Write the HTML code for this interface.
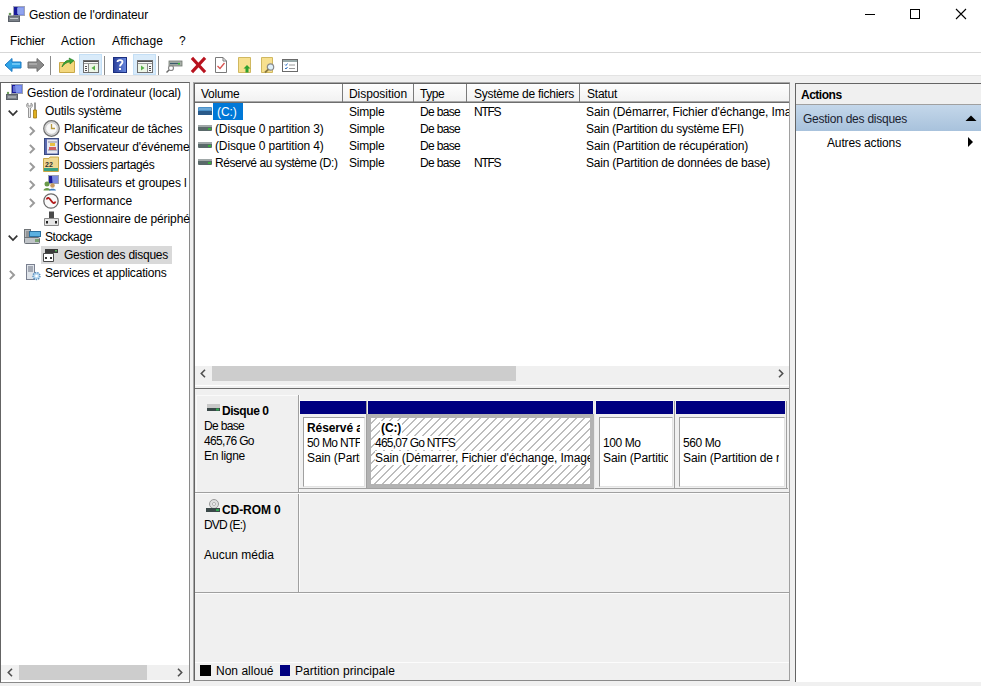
<!DOCTYPE html>
<html><head><meta charset="utf-8">
<style>
*{margin:0;padding:0;box-sizing:border-box}
html,body{width:981px;height:686px;overflow:hidden;background:#f0f0f0;font-family:"Liberation Sans",sans-serif;font-size:12px;color:#000}
.a{position:absolute}
.t{position:absolute;white-space:nowrap;line-height:14px;letter-spacing:-0.1px}
svg{position:absolute;overflow:visible}
</style></head><body>
<!-- title bar -->
<div class="a" style="left:0;top:0;width:981px;height:53px;background:#fff"></div>
<svg style="left:8px;top:6px" width="17" height="16" viewBox="0 0 17 16"><rect x="5.5" y="0.5" width="11" height="9" fill="#7a8ee8" stroke="#a0a4b8"/><path d="M6 1H9.5L10 9H6Z" fill="#1a1a9a"/><rect x="9" y="2" width="6.5" height="6" fill="#9aaef2" opacity="0.7"/><rect x="0.5" y="10" width="11" height="5.5" fill="#7a8088" stroke="#5a6068"/><path d="M2 12.5H10" stroke="#c8ccd0"/><circle cx="2" cy="8" r="1.3" fill="#6a9a5a"/></svg>
<div class="t" style="left:29px;top:8px;letter-spacing:-0.051px">Gestion de l'ordinateur</div>
<!-- window buttons -->
<div class="a" style="left:865px;top:14px;width:10px;height:1px;background:#000"></div>
<div class="a" style="left:910px;top:9px;width:10px;height:10px;border:1px solid #000"></div>
<svg style="left:956px;top:9px" width="10" height="10"><path d="M0 0L10 10M10 0L0 10" stroke="#000" stroke-width="1.1"/></svg>
<!-- menu -->
<div class="t" style="left:10px;top:34px;letter-spacing:-0.188px">Fichier</div>
<div class="t" style="left:61px;top:34px;letter-spacing:0.140px">Action</div>
<div class="t" style="left:112px;top:34px;letter-spacing:0.130px">Affichage</div>
<div class="t" style="left:179px;top:34px">?</div>
<div class="a" style="left:0;top:52px;width:981px;height:1px;background:#d7d7d7"></div>
<!-- toolbar -->
<div class="a" style="left:0;top:53px;width:981px;height:22px;background:#fff"></div>
<div class="a" style="left:0;top:75px;width:981px;height:1px;background:#e3e3e3"></div>


<!-- toolbar icons -->
<svg style="left:4px;top:57px" width="18" height="16" viewBox="0 0 18 16"><path d="M1 8L8 1.5V5H17V11H8V14.5Z" fill="#2fa4e7" stroke="#1a78c2" stroke-width="1"/><path d="M8 6H16V8H8Z" fill="#6cc6f5"/></svg>
<svg style="left:27px;top:57px" width="18" height="16" viewBox="0 0 18 16"><path d="M17 8L10 1.5V5H1V11H10V14.5Z" fill="#8c8c8c" stroke="#6e6e6e" stroke-width="1"/><path d="M2 6H10V8H2Z" fill="#a8a8a8"/></svg>
<div class="a" style="left:50px;top:56px;width:1px;height:19px;background:#8a8a8a"></div>
<svg style="left:59px;top:57px" width="16" height="16" viewBox="0 0 16 16"><path d="M0.5 5.5H6L7 4H15.5V15.5H0.5Z" fill="#f3d77d" stroke="#c8a848"/><path d="M3 10C4 6 7 3 11 3L10 1L15 3.5L11 7L11 5C8 5 5 7 3 10Z" fill="#3aa63a" stroke="#1f7a1f" stroke-width="0.6"/></svg>
<div class="a" style="left:79px;top:54px;width:23px;height:21px;background:#d9ebfa;border:1px solid #c4dff6"></div>
<svg style="left:83px;top:60px" width="16" height="13" viewBox="0 0 16 13"><rect x="0.5" y="0.5" width="15" height="12" fill="#fafafa" stroke="#707070"/><path d="M1 1.5H15" stroke="#505050"/><path d="M1 3.5H15" stroke="#9a9a9a"/><path d="M2 6.5H4M2 8.5H4M2 10.5H4" stroke="#505050"/><path d="M5.5 4V12" stroke="#8a8a8a"/><rect x="6" y="4" width="9" height="8" fill="#eef6e8"/><path d="M12 5.5L8.5 8L12 10.5Z" fill="#58b048"/></svg>
<div class="a" style="left:104px;top:56px;width:1px;height:19px;background:#8a8a8a"></div>
<svg style="left:113px;top:57px" width="14" height="16" viewBox="0 0 14 16"><defs><linearGradient id="hg" x1="0" x2="1"><stop offset="0" stop-color="#2a3f9a"/><stop offset="1" stop-color="#6a8ae0"/></linearGradient></defs><rect x="0.5" y="0.5" width="13" height="15" fill="url(#hg)" stroke="#1b2f80"/><path d="M4.5 5C4.5 2.5 9.5 2.5 9.5 5C9.5 7 7 7 7 9.5" fill="none" stroke="#fff" stroke-width="1.8"/><rect x="6" y="11" width="2" height="2" fill="#fff"/></svg>
<div class="a" style="left:133px;top:54px;width:23px;height:21px;background:#d9ebfa;border:1px solid #c4dff6"></div>
<svg style="left:137px;top:60px" width="16" height="13" viewBox="0 0 16 13"><rect x="0.5" y="0.5" width="15" height="12" fill="#fafafa" stroke="#707070"/><path d="M1 1.5H15" stroke="#505050"/><path d="M1 3.5H15" stroke="#9a9a9a"/><path d="M12 6.5H14M12 8.5H14M12 10.5H14" stroke="#505050"/><path d="M10.5 4V12" stroke="#8a8a8a"/><rect x="1" y="4" width="9" height="8" fill="#eef6e8"/><path d="M4 5.5L7.5 8L4 10.5Z" fill="#58b048"/></svg>
<div class="a" style="left:158px;top:56px;width:1px;height:19px;background:#8a8a8a"></div>
<svg style="left:166px;top:59px" width="16" height="14" viewBox="0 0 16 14"><rect x="3" y="2" width="13" height="5" fill="#a8b0a8" stroke="#707870" stroke-width="0.8"/><path d="M4 4.5H14" stroke="#3a5a6a" stroke-width="1.2"/><rect x="12" y="4" width="2" height="1.5" fill="#2fbf2f"/><circle cx="5" cy="9" r="2.5" fill="none" stroke="#8a8a8a" stroke-width="1.2"/><path d="M3 11L0.5 13.5" stroke="#6a6a6a" stroke-width="1.5"/></svg>
<svg style="left:191px;top:58px" width="15" height="14" viewBox="0 0 15 14"><path d="M2 1L13 13M13 1L2 13" stroke="#b8121e" stroke-width="3.2" stroke-linecap="square"/></svg>
<svg style="left:215px;top:57px" width="12" height="16" viewBox="0 0 12 16"><path d="M0.5 0.5H8L11.5 4V15.5H0.5Z" fill="#fff" stroke="#7a7a7a"/><path d="M8 0.5V4H11.5" fill="none" stroke="#7a7a7a"/><path d="M2.5 9L5 11.5L9.5 6" fill="none" stroke="#d9534f" stroke-width="1.3"/></svg>
<svg style="left:238px;top:57px" width="13" height="16" viewBox="0 0 13 16"><path d="M0.5 0.5H12.5V15.5H0.5Z" fill="#f7e08f" stroke="#d0b860"/><path d="M9 8L12.5 11.5H10.5V15.5H7.5V11.5H5.5Z" fill="#2fa02f"/></svg>
<svg style="left:261px;top:57px" width="15" height="16" viewBox="0 0 15 16"><path d="M0.5 0.5H11.5V15.5H0.5Z" fill="#f7e08f" stroke="#d0b860"/><circle cx="9.5" cy="10" r="3.2" fill="#dff0fa" stroke="#8a8a8a" stroke-width="1.2"/><path d="M7.3 12.3L4 15.5" stroke="#8a7a40" stroke-width="1.8"/></svg>
<svg style="left:282px;top:59px" width="16" height="13" viewBox="0 0 16 13"><rect x="0.5" y="0.5" width="15" height="12" fill="#fff" stroke="#6a6a6a"/><rect x="1" y="1" width="14" height="2" fill="#9aa"/><path d="M3 5.5L4 6.5L5.5 4.5M3 9L4 10L5.5 8" fill="none" stroke="#3070c0"/><path d="M7 6H13M7 9.5H13" stroke="#9a9a9a"/></svg>

<!-- left pane -->
<div class="a" style="left:0;top:82px;width:190px;height:601px;background:#fff;border-left:1px solid #646464;border-top:1px solid #646464;border-right:1px solid #8a8a8a;border-bottom:1px solid #8a8a8a"></div>


<!-- tree -->
<div class="a" style="left:41px;top:246px;width:131px;height:18px;background:#d9d9d9"></div>
<div class="t" style="left:27px;top:86px;letter-spacing:-0.077px">Gestion de l'ordinateur (local)</div>
<div class="t" style="left:45px;top:104px;letter-spacing:-0.156px">Outils système</div>
<div class="t" style="left:64px;top:122px;letter-spacing:-0.131px">Planificateur de tâches</div>
<div class="t" style="left:64px;top:140px">Observateur d'événeme</div>
<div class="t" style="left:64px;top:158px;letter-spacing:-0.378px">Dossiers partagés</div>
<div class="t" style="left:64px;top:176px;letter-spacing:-0.112px">Utilisateurs et groupes l</div>
<div class="t" style="left:64px;top:194px;letter-spacing:-0.064px">Performance</div>
<div class="t" style="left:64px;top:212px">Gestionnaire de périphé</div>
<div class="t" style="left:45px;top:230px;letter-spacing:-0.381px">Stockage</div>
<div class="t" style="left:64px;top:248px;letter-spacing:-0.249px">Gestion des disques</div>
<div class="t" style="left:45px;top:266px;letter-spacing:-0.187px">Services et applications</div>
<svg style="left:8px;top:110px" width="10" height="6" viewBox="0 0 10 6"><path d="M0.7 0.7L5 5L9.3 0.7" fill="none" stroke="#333" stroke-width="1.7"/></svg><svg style="left:8px;top:235px" width="10" height="6" viewBox="0 0 10 6"><path d="M0.7 0.7L5 5L9.3 0.7" fill="none" stroke="#333" stroke-width="1.7"/></svg>
<svg style="left:29px;top:126px" width="6" height="10" viewBox="0 0 6 10"><path d="M0.9 0.9L5 5L0.9 9.1" fill="none" stroke="#9a9a9a" stroke-width="2"/></svg>
<svg style="left:29px;top:144px" width="6" height="10" viewBox="0 0 6 10"><path d="M0.9 0.9L5 5L0.9 9.1" fill="none" stroke="#9a9a9a" stroke-width="2"/></svg>
<svg style="left:29px;top:162px" width="6" height="10" viewBox="0 0 6 10"><path d="M0.9 0.9L5 5L0.9 9.1" fill="none" stroke="#9a9a9a" stroke-width="2"/></svg>
<svg style="left:29px;top:180px" width="6" height="10" viewBox="0 0 6 10"><path d="M0.9 0.9L5 5L0.9 9.1" fill="none" stroke="#9a9a9a" stroke-width="2"/></svg>
<svg style="left:29px;top:198px" width="6" height="10" viewBox="0 0 6 10"><path d="M0.9 0.9L5 5L0.9 9.1" fill="none" stroke="#9a9a9a" stroke-width="2"/></svg>
<svg style="left:9px;top:270px" width="6" height="10" viewBox="0 0 6 10"><path d="M0.9 0.9L5 5L0.9 9.1" fill="none" stroke="#9a9a9a" stroke-width="2"/></svg>

<svg style="left:6px;top:84px" width="17" height="17" viewBox="0 0 17 17"><rect x="5.5" y="0.5" width="11" height="9" fill="#6a7fe8" stroke="#9aa0b0"/><path d="M6 1H9L10 9H6Z" fill="#1a1a9a"/><rect x="7" y="2" width="8" height="6" fill="#8fa4f0" opacity="0.6"/><rect x="0.5" y="10.5" width="11" height="5" fill="#7a8088" stroke="#5a6068"/><path d="M2 13H10" stroke="#c8ccd0"/><circle cx="2" cy="9" r="1.2" fill="#6a9a5a"/></svg>
<svg style="left:26px;top:102px" width="13" height="17" viewBox="0 0 13 17"><path d="M2 1C0 2 0 5 2.5 6V15.5H4.5V6C7 5 7 2 5 1V4H2Z" fill="#e8e8e8" stroke="#8a8a8a" stroke-width="0.9"/><path d="M9 0.5V8" stroke="#555" stroke-width="1.2"/><path d="M7.5 8H10.5V16H7.5Z" fill="#e0b020" stroke="#a07810" stroke-width="0.8"/></svg>
<svg style="left:43px;top:120px" width="17" height="17" viewBox="0 0 17 17"><circle cx="8.5" cy="8.5" r="7.8" fill="#d8d8d8" stroke="#707070" stroke-width="1.2"/><circle cx="8.5" cy="8.5" r="5.8" fill="#f8f8f8" stroke="#b8b8b8" stroke-width="0.6"/><path d="M8.5 4V8.5H12" fill="none" stroke="#b89a40" stroke-width="1.3"/></svg>
<svg style="left:44px;top:138px" width="15" height="17" viewBox="0 0 15 17"><rect x="0.5" y="0.5" width="14" height="16" fill="#5a6ab0" stroke="#3a4a80"/><rect x="3" y="1.5" width="10.5" height="14" fill="#e8e8f0"/><path d="M4 4H13M4 12H13" stroke="#8a8a9a"/><rect x="6" y="5" width="5" height="3" fill="#e8c040"/><rect x="5" y="9" width="7" height="3" fill="#d06060"/></svg>
<svg style="left:43px;top:156px" width="16" height="16" viewBox="0 0 16 16"><path d="M0.5 2.5H6L7 1H15.5V15.5H0.5Z" fill="#f0d890" stroke="#c8a848"/><path d="M1 12H15V15H1Z" fill="#3aa080"/><text x="2" y="11" font-size="7" font-family="Liberation Sans" font-weight="bold" fill="#333">22</text></svg>
<svg style="left:43px;top:175px" width="16" height="16" viewBox="0 0 16 16"><rect x="5.5" y="0.5" width="10" height="8" fill="#7a8ae0" stroke="#9aa0b0"/><path d="M6 1H9L9.5 8H6Z" fill="#1a1a9a"/><circle cx="4" cy="9" r="2.5" fill="#6a9a4a"/><path d="M0.5 15.5C0.5 12 7.5 12 7.5 15.5Z" fill="#6a9a4a"/><circle cx="9.5" cy="10.5" r="2.3" fill="#c89a60"/><path d="M6 15.5C6 13 13 13 13 15.5Z" fill="#3a7ac0"/></svg>
<svg style="left:43px;top:193px" width="16" height="16" viewBox="0 0 16 16"><circle cx="8" cy="8" r="7.2" fill="#fafafa" stroke="#6a6a6a" stroke-width="1.3"/><path d="M3.5 6.5C4.5 4 6 4.5 8 7.5C10 10.5 11.5 11 12.5 8.5" fill="none" stroke="#b01818" stroke-width="1.8"/></svg>
<svg style="left:44px;top:211px" width="15" height="16" viewBox="0 0 15 16"><rect x="5" y="0.5" width="5" height="7" fill="#4a4a4a"/><path d="M0.5 7.5H14.5V14.5H0.5Z" fill="#e6e6e6" stroke="#8a8a8a"/><rect x="2" y="10" width="2" height="2.5" fill="#222"/><rect x="11" y="10" width="2" height="2.5" fill="#222"/></svg>
<svg style="left:24px;top:228px" width="17" height="16" viewBox="0 0 17 16"><rect x="0.5" y="9.5" width="15" height="6" rx="1" fill="#c0c4c8" stroke="#6a7078"/><rect x="0.5" y="1.5" width="6" height="8" fill="#b8bcc0" stroke="#707478"/><rect x="5.5" y="3.5" width="11" height="5" fill="#5ab0e0" stroke="#2a70a0"/><path d="M2 4H5M2 6H5M2 8H5" stroke="#707070"/><path d="M12 11V14M14 11V14" stroke="#4a8a3a" stroke-width="1.2"/></svg>
<svg style="left:43px;top:248px" width="15" height="14" viewBox="0 0 15 14"><rect x="2" y="1" width="13" height="4" fill="#3a3a3a"/><rect x="12" y="2" width="2" height="1.5" fill="#5ab05a"/><path d="M0.5 5.5H10.5V13.5H0.5Z" fill="#fff" stroke="#4a4a4a"/><rect x="2" y="9" width="2" height="2" fill="#333"/><rect x="7" y="9" width="2" height="2" fill="#333"/></svg>
<svg style="left:26px;top:264px" width="15" height="17" viewBox="0 0 15 17"><rect x="0.5" y="0.5" width="8" height="15" fill="#dfe4ea" stroke="#7a8090"/><path d="M2 3H7M2 5H7M2 7H7" stroke="#6a7080"/><circle cx="10.5" cy="12" r="3.5" fill="#b8d8f0" stroke="#5a90c0" stroke-width="1.4" stroke-dasharray="1.4 1"/><circle cx="10.5" cy="12" r="1.3" fill="#fff"/></svg>

<!-- center pane -->
<div class="a" style="left:193px;top:82px;width:597px;height:599px;border-left:1px solid #a8a8a8;border-top:1px solid #a8a8a8"></div>
<div class="a" style="left:194px;top:83px;width:596px;height:598px;background:#f0f0f0;border-left:1px solid #646464;border-top:1px solid #646464;border-right:1px solid #a0a0a0;border-bottom:1px solid #8a8a8a"></div>


<!-- list header -->
<div class="a" style="left:195px;top:84px;width:594px;height:18px;background:linear-gradient(#fdfdfd,#f1f1f1);border-top:1px solid #fff"></div>
<div class="a" style="left:195px;top:101px;width:594px;height:1px;background:#a8a8a8"></div>
<div class="a" style="left:195px;top:102px;width:594px;height:1px;background:#6e6e6e"></div>
<div class="a" style="left:342px;top:84px;width:1px;height:18px;background:#7a7a7a"></div>
<div class="a" style="left:413px;top:84px;width:1px;height:18px;background:#7a7a7a"></div>
<div class="a" style="left:466px;top:84px;width:1px;height:18px;background:#7a7a7a"></div>
<div class="a" style="left:579px;top:84px;width:1px;height:18px;background:#7a7a7a"></div>
<div class="t" style="left:201px;top:87px;letter-spacing:-0.255px">Volume</div>
<div class="t" style="left:349px;top:87px;letter-spacing:-0.064px">Disposition</div>
<div class="t" style="left:420px;top:87px;letter-spacing:-0.429px">Type</div>
<div class="t" style="left:474px;top:87px;letter-spacing:-0.248px">Système de fichiers</div>
<div class="t" style="left:587px;top:87px;letter-spacing:-0.227px">Statut</div>
<!-- list body -->
<div class="a" style="left:195px;top:103px;width:594px;height:263px;background:#fff"></div>
<div class="a" style="left:213px;top:103px;width:30px;height:17px;background:#0078d7"></div>
<div class="t" style="left:217px;top:105px;color:#fff">(C:)</div>
<div class="t" style="left:215px;top:122px;letter-spacing:-0.122px">(Disque 0 partition 3)</div>
<div class="t" style="left:215px;top:139px;letter-spacing:-0.122px">(Disque 0 partition 4)</div>
<div class="t" style="left:215px;top:156px;letter-spacing:-0.444px">Réservé au système (D:)</div>
<div class="t" style="left:349px;top:105px;letter-spacing:-0.198px">Simple</div>
<div class="t" style="left:349px;top:122px;letter-spacing:-0.198px">Simple</div>
<div class="t" style="left:349px;top:139px;letter-spacing:-0.198px">Simple</div>
<div class="t" style="left:349px;top:156px;letter-spacing:-0.198px">Simple</div>
<div class="t" style="left:420px;top:105px;letter-spacing:-0.672px">De base</div>
<div class="t" style="left:420px;top:122px;letter-spacing:-0.672px">De base</div>
<div class="t" style="left:420px;top:139px;letter-spacing:-0.672px">De base</div>
<div class="t" style="left:420px;top:156px;letter-spacing:-0.672px">De base</div>
<div class="t" style="left:474px;top:105px;letter-spacing:-1.236px">NTFS</div>
<div class="t" style="left:474px;top:156px;letter-spacing:-1.236px">NTFS</div>
<div class="a" style="left:586px;top:103px;width:203px;height:70px;overflow:hidden">
<div class="t" style="left:0;top:2px">Sain (Démarrer, Fichier d'échange, Image</div>
<div class="t" style="left:0;top:19px;letter-spacing:-0.270px">Sain (Partition du système EFI)</div>
<div class="t" style="left:0;top:36px;letter-spacing:-0.122px">Sain (Partition de récupération)</div>
<div class="t" style="left:0;top:53px;letter-spacing:-0.213px">Sain (Partition de données de base)</div>
</div>
<svg style="left:198px;top:107px" width="14" height="8" viewBox="0 0 14 8"><rect x="0" y="0" width="14" height="8" rx="1" fill="#4a90c8"/><rect x="0" y="4" width="14" height="4" fill="#2a5a8a"/><path d="M1 2H13" stroke="#8ac0e8"/></svg>
<svg style="left:198px;top:124px" width="14" height="8" viewBox="0 0 14 8"><rect x="0" y="1" width="14" height="6" rx="1" fill="#5a6a6a"/><rect x="0" y="1" width="14" height="2" fill="#a0a8a8"/><rect x="10" y="4" width="3" height="2" fill="#3ab03a"/></svg>
<svg style="left:198px;top:141px" width="14" height="8" viewBox="0 0 14 8"><rect x="0" y="1" width="14" height="6" rx="1" fill="#5a6a6a"/><rect x="0" y="1" width="14" height="2" fill="#a0a8a8"/><rect x="10" y="4" width="3" height="2" fill="#3ab03a"/></svg>
<svg style="left:198px;top:158px" width="14" height="8" viewBox="0 0 14 8"><rect x="0" y="1" width="14" height="6" rx="1" fill="#5a6a6a"/><rect x="0" y="1" width="14" height="2" fill="#a0a8a8"/><rect x="10" y="4" width="3" height="2" fill="#3ab03a"/></svg>
<!-- h scrollbar -->
<div class="a" style="left:195px;top:366px;width:594px;height:19px;background:#f0f0f0"></div>
<div class="a" style="left:212px;top:366px;width:304px;height:15px;background:#cdcdcd"></div>
<svg style="left:200px;top:369px" width="6" height="9" viewBox="0 0 6 9"><path d="M5 0.8L1.3 4.5L5 8.2" fill="none" stroke="#505050" stroke-width="1.6"/></svg>
<svg style="left:778px;top:369px" width="6" height="9" viewBox="0 0 6 9"><path d="M1 0.8L4.7 4.5L1 8.2" fill="none" stroke="#505050" stroke-width="1.6"/></svg>
<div class="a" style="left:195px;top:385px;width:594px;height:1px;background:#fff"></div>
<div class="a" style="left:195px;top:388px;width:594px;height:1px;background:#6e6e6e"></div>


<!-- disk map -->
<div class="a" style="left:195px;top:389px;width:594px;height:291px;background:#f0f0f0"></div>
<div class="a" style="left:196px;top:395px;width:102px;height:97px;border-top:1px solid #fafafa;border-left:1px solid #fafafa"></div>
<div class="a" style="left:298px;top:395px;width:1px;height:198px;background:#a0a0a0"></div>
<div class="a" style="left:299px;top:395px;width:1px;height:198px;background:#fcfcfc"></div>
<div class="a" style="left:195px;top:492px;width:594px;height:1px;background:#a0a0a0"></div>
<div class="a" style="left:195px;top:493px;width:594px;height:1px;background:#fcfcfc"></div>
<div class="a" style="left:195px;top:592px;width:594px;height:1px;background:#a0a0a0"></div>
<div class="a" style="left:195px;top:593px;width:594px;height:1px;background:#fcfcfc"></div>
<svg style="left:207px;top:404px" width="13" height="8" viewBox="0 0 13 8"><rect x="0" y="0" width="13" height="4" fill="#c8c8c8"/><rect x="0" y="4" width="13" height="3" fill="#3a4848"/><rect x="9" y="4.5" width="3" height="2" fill="#2fa84f"/></svg>
<div class="t" style="left:222px;top:404px;font-weight:bold;letter-spacing:-0.439px">Disque 0</div>
<div class="t" style="left:204px;top:419px;letter-spacing:-0.672px">De base</div>
<div class="t" style="left:204px;top:434px;letter-spacing:-0.694px">465,76 Go</div>
<div class="t" style="left:204px;top:449px;letter-spacing:-0.297px">En ligne</div>
<svg style="left:206px;top:499px" width="15" height="14" viewBox="0 0 15 14"><circle cx="8" cy="5" r="4.5" fill="#e0e0e0" stroke="#9a9a9a"/><circle cx="8" cy="5" r="1.5" fill="#fff" stroke="#8a8a8a" stroke-width="0.6"/><rect x="0" y="9" width="14" height="4" fill="#3a4848"/><rect x="10" y="10" width="3" height="2" fill="#2fa84f"/></svg>
<div class="t" style="left:222px;top:503px;font-weight:bold;letter-spacing:-0.080px">CD-ROM 0</div>
<div class="t" style="left:204px;top:518px;letter-spacing:-0.825px">DVD (E:)</div>
<div class="t" style="left:204px;top:548px;letter-spacing:-0.013px">Aucun média</div>

<!-- partitions -->
<div class="a" style="left:298px;top:488px;width:490px;height:1px;background:#a0a0a0"></div>
<!-- cell1 -->
<div class="a" style="left:300px;top:400px;width:66px;height:1px;background:#fcfcfc"></div>
<div class="a" style="left:300px;top:401px;width:66px;height:13px;background:#000080"></div>
<div class="a" style="left:303px;top:417px;width:62px;height:70px;background:#fff;border-left:1px solid #a0a0a0;border-top:1px solid #a0a0a0;border-right:1px solid #e3e3e3;border-bottom:1px solid #e3e3e3;overflow:hidden"><div class="a" style="left:0;top:0;width:56px;height:68px;overflow:hidden">
<div class="t" style="left:3px;top:3px;font-weight:bold">Réservé au système</div>
<div class="t" style="left:3px;top:18px;letter-spacing:-0.602px">50 Mo NTFS</div>
<div class="t" style="left:3px;top:33px">Sain (Partition</div>
</div></div>
<div class="a" style="left:366px;top:401px;width:1px;height:88px;background:#a0a0a0"></div>
<!-- cell2 selected -->
<div class="a" style="left:368px;top:400px;width:225px;height:1px;background:#fcfcfc"></div>
<div class="a" style="left:368px;top:401px;width:225px;height:13px;background:#000080"></div>
<div class="a" style="left:367px;top:414px;width:227px;height:74px;border:4px solid #b2b2b2;overflow:hidden;background-color:#fff;background-image:repeating-linear-gradient(-45deg, transparent 0px, transparent 4.75px, #bdbdbd 4.75px, #bdbdbd 5.66px)">
<div class="t" style="left:9px;top:3px;font-weight:bold;background:#fff;padding:0 1px">(C:)</div>
<div class="t" style="left:4px;top:18px;background:#fff;letter-spacing:-0.766px">465,07 Go NTFS</div>
<div class="t" style="left:4px;top:33px;background:#fff">Sain (Démarrer, Fichier d'échange, Image</div>
</div>
<div class="a" style="left:594px;top:401px;width:1px;height:88px;background:#e8e8e8"></div>
<!-- cell3 -->
<div class="a" style="left:596px;top:400px;width:77px;height:1px;background:#fcfcfc"></div>
<div class="a" style="left:596px;top:401px;width:77px;height:13px;background:#000080"></div>
<div class="a" style="left:599px;top:417px;width:74px;height:70px;background:#fff;border-left:1px solid #a0a0a0;border-top:1px solid #a0a0a0;border-right:1px solid #e3e3e3;border-bottom:1px solid #e3e3e3;overflow:hidden"><div class="a" style="left:0;top:0;width:68px;height:68px;overflow:hidden">
<div class="t" style="left:3px;top:18px;letter-spacing:-0.405px">100 Mo</div>
<div class="t" style="left:3px;top:33px;letter-spacing:-0.122px">Sain (Partition de récupération)</div>
</div></div>
<div class="a" style="left:674px;top:401px;width:1px;height:88px;background:#a0a0a0"></div>
<!-- cell4 -->
<div class="a" style="left:676px;top:400px;width:109px;height:1px;background:#fcfcfc"></div>
<div class="a" style="left:676px;top:401px;width:109px;height:13px;background:#000080"></div>
<div class="a" style="left:679px;top:417px;width:106px;height:70px;background:#fff;border-left:1px solid #a0a0a0;border-top:1px solid #a0a0a0;border-right:1px solid #e3e3e3;border-bottom:1px solid #e3e3e3;overflow:hidden"><div class="a" style="left:0;top:0;width:99px;height:68px;overflow:hidden">
<div class="t" style="left:3px;top:18px;letter-spacing:-0.405px">560 Mo</div>
<div class="t" style="left:3px;top:33px;letter-spacing:-0.122px">Sain (Partition de récupération)</div>
</div></div>
<div class="a" style="left:786px;top:401px;width:1px;height:88px;background:#a0a0a0"></div>

<!-- legend -->
<div class="a" style="left:195px;top:662px;width:594px;height:1px;background:#fcfcfc"></div>
<div class="a" style="left:200px;top:665px;width:11px;height:11px;background:#000"></div>
<div class="t" style="left:216px;top:664px;letter-spacing:0.013px">Non alloué</div>
<div class="a" style="left:280px;top:665px;width:10px;height:11px;background:#000080"></div>
<div class="t" style="left:295px;top:664px;letter-spacing:0.064px">Partition principale</div>

<!-- right pane -->
<div class="a" style="left:795px;top:83px;width:186px;height:599px;background:#fff;border-left:1px solid #646464;border-top:1px solid #646464"></div>


<div class="a" style="left:796px;top:84px;width:185px;height:20px;background:#f0f0f0"></div>
<div class="a" style="left:796px;top:104px;width:185px;height:1px;background:#a0a0a0"></div>
<div class="t" style="left:801px;top:88px;font-weight:bold;letter-spacing:-0.488px">Actions</div>
<div class="a" style="left:796px;top:105px;width:185px;height:26px;background:linear-gradient(#c4d7ea,#a8c2dc)"></div>
<div class="t" style="left:803px;top:112px;color:#1a2230;letter-spacing:-0.249px">Gestion des disques</div>
<svg style="left:965px;top:115px" width="11" height="6" viewBox="0 0 10 6"><path d="M0 6L5.5 0.5L11 6Z" fill="#000"/></svg>
<div class="t" style="left:827px;top:136px;letter-spacing:-0.146px">Autres actions</div>
<svg style="left:968px;top:137px" width="6" height="10" viewBox="0 0 6 10"><path d="M0 0L5 5L0 10Z" fill="#000"/></svg>
<!-- left scrollbar -->
<div class="a" style="left:1px;top:665px;width:188px;height:15px;background:#f0f0f0"></div>
<div class="a" style="left:19px;top:665px;width:128px;height:15px;background:#cdcdcd"></div>
<svg style="left:7px;top:668px" width="6" height="9" viewBox="0 0 6 9"><path d="M5 0.8L1.3 4.5L5 8.2" fill="none" stroke="#505050" stroke-width="1.6"/></svg>
<svg style="left:177px;top:668px" width="6" height="9" viewBox="0 0 6 9"><path d="M1 0.8L4.7 4.5L1 8.2" fill="none" stroke="#505050" stroke-width="1.6"/></svg>

</body></html>
